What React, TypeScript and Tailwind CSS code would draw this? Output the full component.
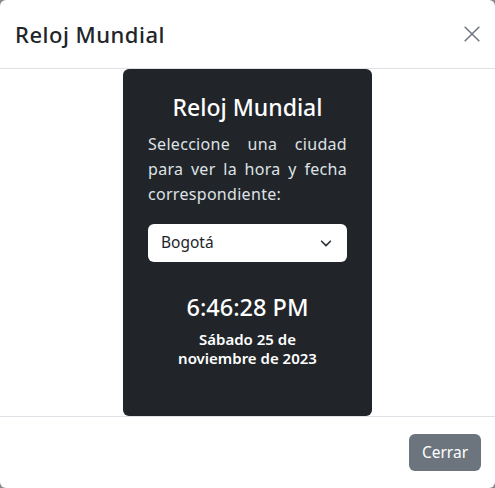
import React from 'react';

const font = { fontFamily: '"Noto Sans", "Open Sans", sans-serif' };

export default function App() {
  return (
    <div className="w-[495px] h-[488px] bg-[#8a8a8a]" style={font}>
      <div className="w-full h-full bg-white rounded-[6px] flex flex-col overflow-hidden">
        {/* Header */}
        <div className="h-[69px] shrink-0 flex items-center justify-between pl-[15px] pr-[14px] border-b border-[#dee2e6]">
          <h5 className="text-[22px] font-medium tracking-[0.5px] text-[#212529] leading-none pb-[1px]">Reloj Mundial</h5>
          <button className="w-[18px] h-[18px] flex items-center justify-center text-[#6c757d]" aria-label="Cerrar">
            <svg viewBox="0 0 16 16" className="w-[18px] h-[18px]" fill="none" stroke="currentColor" strokeWidth="1.3">
              <path d="M1.5 1.5l13 13M14.5 1.5l-13 13" />
            </svg>
          </button>
        </div>

        {/* Body */}
        <div className="flex-1 flex justify-center">
          <div className="w-[249px] bg-[#212529] rounded-[6px] px-[25px] pt-[20px] text-white">
            <h2 className="text-[23px] font-medium text-center leading-[36px]">Reloj Mundial</h2>
            <p className="mt-[7px] text-[16px] tracking-[0.3px] leading-[25px] text-justify text-[#dee2e6]">
              Seleccione una ciudad para ver la hora y fecha correspondiente:
            </p>
            <div className="mt-[17px] h-[38px] bg-white rounded-[6px] flex items-center justify-between pl-[13px] pr-[14px] text-[#212529]">
              <span className="text-[15.5px]">Bogotá</span>
              <svg viewBox="0 0 16 16" className="w-[14px] h-[14px]" fill="none" stroke="#343a40" strokeWidth="2" strokeLinecap="round" strokeLinejoin="round">
                <path d="M3 6l5 5 5-5" />
              </svg>
            </div>
            <div className="mt-[27px] text-center text-[23.5px] font-medium leading-[36px]">6:46:28 PM</div>
            <div className="mt-[5px] text-center text-[15px] font-semibold leading-[19px]">
              Sábado 25 de
              <br />
              noviembre de 2023
            </div>
          </div>
        </div>

        {/* Footer */}
        <div className="h-[72px] shrink-0 border-t border-[#dee2e6] flex items-start justify-end pt-[17px] pr-[14px]">
          <button className="w-[72px] h-[37px] bg-[#6c757d] text-white text-[15.5px] rounded-[6px]">Cerrar</button>
        </div>
      </div>
    </div>
  );
}
